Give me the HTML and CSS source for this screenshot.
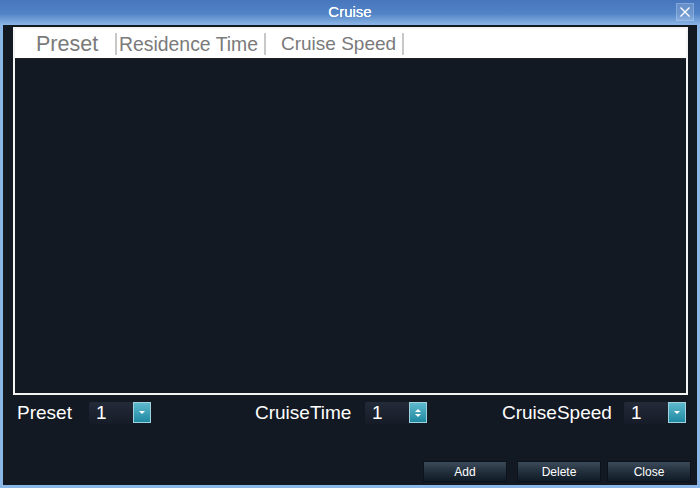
FILE: index.html
```html
<!DOCTYPE html>
<html>
<head>
<meta charset="utf-8">
<link rel="stylesheet" href="styles.css">
</head>
<body>
<div class="window">
  <div class="titlebar">
    <span class="title">Cruise</span>
    <span class="close">
      <svg width="12" height="12" viewBox="0 0 12 12"><path d="M1.5 1.5 L10.5 10.5 M10.5 1.5 L1.5 10.5" stroke="#fff" stroke-width="1.4"/></svg>
    </span>
  </div>
  <div class="frame">
    <div class="table">
      <div class="thead">
        <div class="th th-preset">Preset</div>
        <div class="th th-time">Residence Time</div>
        <div class="th th-speed">Cruise Speed</div>
      </div>
      <div class="tbody"></div>
    </div>
    <div class="controls">
      <div class="group g1">
        <span class="label">Preset</span>
        <div class="select"><span class="val">1</span><span class="btn"><i class="down"></i></span></div>
      </div>
      <div class="group g2">
        <span class="label">CruiseTime</span>
        <div class="select"><span class="val">1</span><span class="btn spin"><i class="up"></i><i class="down"></i></span></div>
      </div>
      <div class="group g3">
        <span class="label">CruiseSpeed</span>
        <div class="select"><span class="val">1</span><span class="btn"><i class="down"></i></span></div>
      </div>
    </div>
    <div class="actions">
      <button class="act act-add">Add</button>
      <button class="act act-del">Delete</button>
      <button class="act act-close">Close</button>
    </div>
  </div>
</div>
</body>
</html>
```

FILE: styles.css
```css
body {
  margin: 0;
  overflow: hidden;
  font-family: "Liberation Sans", Arial, sans-serif;
}

.window {
  width: 700px;
  height: 488px;
  display: flex;
  flex-direction: column;
}

.titlebar {
  height: 25px;
  flex: none;
  position: relative;
  display: flex;
  align-items: center;
  justify-content: center;
  background: linear-gradient(#4876bd 0%, #5283c6 55%, #8cb6e6 100%);
}

.title {
  color: #fff;
  font-size: 15px;
  margin-top: -2px;
  text-shadow: 0 0 0.4px #fff;
}

.close {
  position: absolute;
  right: 6px;
  top: 3px;
  width: 18px;
  height: 18px;
  display: flex;
  align-items: center;
  justify-content: center;
  background: rgba(255, 255, 255, 0.16);
  border: 1px solid rgba(180, 210, 245, 0.35);
  box-sizing: border-box;
}

.frame {
  flex: 1;
  background: #131922;
  border-left: 3px solid #8ab6e8;
  border-right: 3px solid #8ab6e8;
  border-bottom: 3px solid #8ab6e8;
  display: flex;
  flex-direction: column;
}

.table {
  margin: 2px 0 0 10px;
  width: 675px;
  height: 368px;
  border: 2px solid #f4f4f4;
  box-sizing: border-box;
  display: flex;
  flex-direction: column;
}

.thead {
  height: 29px;
  background: #fff;
  display: flex;
  align-items: center;
  border-bottom: 1px solid #222;
}

.th {
  color: #7a7a7a;
  font-size: 19px;
  height: 22px;
  line-height: 22px;
  border-right: 2px solid #c8c8c8;
  box-sizing: border-box;
  white-space: nowrap;
}

.th-preset {
  width: 102px;
  padding-left: 21px;
  font-size: 21.5px;
}

.th-time {
  width: 149px;
  padding-left: 2px;
  font-size: 19.4px;
}

.th-speed {
  width: 138px;
  padding-left: 15px;
}

.tbody {
  flex: 1;
}

.controls {
  display: flex;
  margin-top: 7px;
  padding-left: 14px;
  height: 22px;
}

.group {
  display: flex;
  align-items: center;
}

.label {
  color: #fff;
  font-size: 19px;
}

.g1 .label { width: 72px; }
.g2 { margin-left: 104px; }
.g2 .label { width: 110px; }
.g3 { margin-left: 75px; }
.g3 .label { width: 122px; }

.select {
  width: 62px;
  height: 22px;
  display: flex;
  background: linear-gradient(#232a38, #161c27);
  border-radius: 2px;
  box-sizing: border-box;
}

.val {
  flex: 1;
  color: #fff;
  font-size: 19px;
  line-height: 22px;
  padding-left: 7px;
}

.btn {
  width: 18px;
  height: 21px;
  box-sizing: border-box;
  border: 1px solid #9fd2dc;
  background: linear-gradient(#5fb9cc, #1f8aa2);
  display: flex;
  flex-direction: column;
  align-items: center;
  justify-content: center;
  gap: 2px;
}

.btn i {
  width: 0;
  height: 0;
  border-left: 3px solid transparent;
  border-right: 3px solid transparent;
}

.btn i.down {
  border-top: 3px solid #fff;
}

.btn i.up {
  border-bottom: 3px solid #fff;
}

.actions {
  display: flex;
  justify-content: flex-end;
  margin-top: 37px;
  padding-right: 6px;
}

.act {
  width: 84px;
  height: 21px;
  border: 1px solid #0c121a;
  border-radius: 1px;
  background: linear-gradient(#3c4b5b 0%, #25323f 45%, #0f1b26 100%);
  color: #fff;
  font-family: "Liberation Sans", Arial, sans-serif;
  font-size: 12px;
  padding: 0;
}

.act-del {
  margin-left: 10px;
}

.act-close {
  margin-left: 6px;
}
```
